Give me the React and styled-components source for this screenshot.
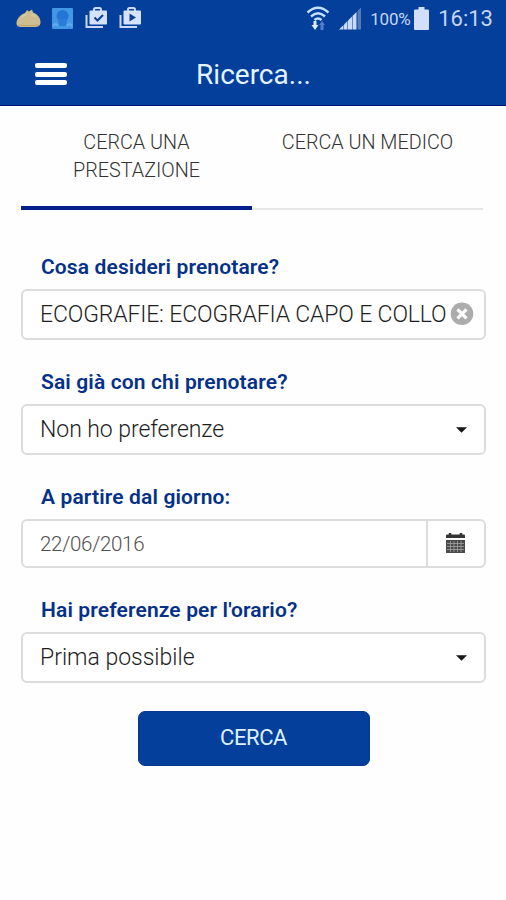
import styled, { createGlobalStyle } from "styled-components";

const GlobalStyle = createGlobalStyle`
  * {
    box-sizing: border-box;
  }

  body {
    margin: 0;
    background-color: #fefefe;
    font-family: Roboto, "Liberation Sans", sans-serif;
  }
`;

const Screen = styled.div`
  width: 506px;
  height: 900px;
  overflow: hidden;
  background-color: #fefefe;
`;

const Header = styled.header`
  height: 106px;
  background-color: #033f9b;
  border-bottom: 1px solid #020f74;
`;

const StatusBar = styled.div`
  display: flex;
  align-items: center;
  justify-content: space-between;
  height: 36px;
  padding: 0 13px 0 16px;
  color: #c5d6f7;
`;

const StatusGroup = styled.div`
  display: flex;
  align-items: center;
`;

const StatusIcon = styled.svg`
  display: block;
  flex: none;
  margin-right: ${({ $gap }) => $gap || 0}px;
`;

const Percent = styled.span`
  width: 40px;
  margin-right: 4px;
  padding-top: 2px;
  font-size: 17px;
  letter-spacing: -0.2px;
  line-height: 36px;
`;

const Clock = styled.span`
  padding-top: 2px;
  font-size: 22px;
  line-height: 36px;
`;

const TitleBar = styled.div`
  display: grid;
  grid-template-columns: 69px 1fr 68px;
  align-items: center;
  height: 69px;
  padding-top: 7px;
`;

const MenuButton = styled.button`
  display: flex;
  flex-direction: column;
  gap: 3.5px;
  width: 32px;
  margin-left: 35px;
  padding: 0;
  border: none;
  background: none;
`;

const MenuLine = styled.span`
  height: 5px;
  border-radius: 2px;
  background-color: #ffffff;
`;

const Title = styled.h1`
  margin: 0;
  padding-top: 2px;
  color: #e2f5ff;
  font-size: 28px;
  font-weight: 400;
  line-height: 34px;
  text-align: center;
`;

const Tabs = styled.nav`
  display: flex;
  align-items: flex-end;
  height: 104px;
  margin: 0 23px 0 21px;
`;

const Tab = styled.button`
  display: flex;
  align-items: flex-start;
  justify-content: center;
  width: 231px;
  height: 104px;
  padding: 23px 30px 0;
  border: none;
  border-bottom: ${({ $active }) =>
    $active ? "4px solid #021f8a" : "2px solid #e6e6e8"};
  background: none;
  color: #333333;
  font-family: inherit;
  font-size: 19.8px;
  font-weight: 300;
  line-height: 28px;
  text-align: center;
  white-space: ${({ $active }) => ($active ? "normal" : "nowrap")};
`;

const Form = styled.form`
  display: flex;
  flex-direction: column;
  padding: 42px 20px 0 21px;
`;

const Field = styled.div`
  margin-bottom: 27px;
`;

const Label = styled.label`
  display: block;
  margin-bottom: 7px;
  padding-left: 20px;
  color: #053189;
  font-size: 21px;
  font-weight: 600;
  letter-spacing: 0.13px;
  line-height: 30px;
`;

const Control = styled.div`
  display: flex;
  align-items: center;
  height: ${({ $height }) => $height || 51}px;
  padding-left: 17px;
  border: 2px solid #dcdcde;
  border-radius: 6px;
  background-color: #ffffff;
`;

const Value = styled.span`
  flex: 1;
  color: ${({ $muted }) => ($muted ? "#505050" : "#1e1e1e")};
  font-size: ${({ $muted }) => ($muted ? 20.5 : 23)}px;
  font-weight: 300;
  letter-spacing: ${({ $spacing }) => $spacing || 0}px;
  line-height: 30px;
  white-space: nowrap;
`;

const ControlIcon = styled.svg`
  display: block;
  flex: none;
  margin-right: ${({ $right }) => $right}px;
`;

const Addon = styled.div`
  display: flex;
  align-items: center;
  height: 100%;
  padding: 0 0 2px 18px;
  border-left: 2px solid #dcdcde;
`;

const SubmitButton = styled.button`
  align-self: center;
  width: 232px;
  height: 55px;
  margin-top: 1px;
  padding: 0 0 2px;
  border: 1px solid #0a3790;
  border-radius: 7px;
  background-color: #033f9b;
  color: #dcf0ff;
  font-family: inherit;
  font-size: 22px;
  font-weight: 400;
  letter-spacing: -0.4px;
`;

const BagIcon = ({ gap, children }) => (
  <StatusIcon $gap={gap} width="23" height="24" viewBox="0 0 23 24">
    <path d="M1.500 9V21H18" fill="none" stroke="#c9daf8" strokeWidth="2" />
    <path
      d="M9 5V3.500Q9 2 10.500 2h4Q16 2 16 3.500V5"
      fill="none"
      stroke="#c9daf8"
      strokeWidth="2"
    />
    <rect x="4.500" y="4.500" width="17.500" height="14" rx="1" fill="#d5e2fb" />
    {children}
  </StatusIcon>
);

const Caret = () => (
  <ControlIcon $right={17} width="11" height="6" viewBox="0 0 11 6">
    <path d="M0 0.300H11L5.500 5.700Z" fill="#161616" />
  </ControlIcon>
);

const ClearIcon = () => (
  <ControlIcon $right={10} width="24" height="26" viewBox="0 0 24 26">
    <circle cx="12" cy="11.800" r="11.300" fill="#acacac" />
    <path d="M7.500 7.300l9 9M16.500 7.300l-9 9" stroke="#ffffff" strokeWidth="3.200" />
  </ControlIcon>
);

const CalendarIcon = () => (
  <ControlIcon $right={19} width="19" height="20" viewBox="0 0 19 20">
    <path d="M0 5V2.500Q0 1.500 1 1.500H18Q19 1.500 19 2.500V5Z" fill="#333333" />
    <path d="M4 0v3M15 0v3" stroke="#333333" strokeWidth="2.500" />
    <rect y="7" width="19" height="13" fill="#4b4b4b" />
    <path
      d="M1 10.500H18M1 13.500H18M1 16.500H18M4.500 8V19M8 8V19M11.500 8V19M15 8V19"
      stroke="#a3a3a3"
      strokeWidth="0.800"
    />
  </ControlIcon>
);

const App = () => {
  return (
    <Screen>
      <GlobalStyle />
      <Header>
        <StatusBar>
          <StatusGroup>
            <StatusIcon $gap={11} width="25" height="20" viewBox="0 0 25 20">
              <path
                d="M0.500 15C1 10.500 4 7 9 5L11 2L13 3.500L16 1.500L17 4.500C22 6 25 11 24.500 15C24 18 22 19 18 19H6C2 19 0.500 18 0.500 15Z"
                fill="#cdbd91"
              />
              <path
                d="M6 9Q8 7 11 6M15 6Q18 7 19.500 9"
                fill="none"
                stroke="#d6ca9f"
                strokeWidth="1.500"
              />
              <path d="M2 17Q12 18.500 23 17" fill="none" stroke="#bda469" />
            </StatusIcon>
            <StatusIcon $gap={12} width="21" height="21" viewBox="0 0 21 21">
              <rect width="21" height="21" rx="1" fill="#4397e4" />
              <circle cx="10.500" cy="8" r="6" fill="#2376d3" />
              <path d="M6 11H15L14 18H7Z" fill="#2a7cd6" />
              <path
                d="M1 18Q4 14 6 18M20 18Q17 14 15 18"
                stroke="#64acec"
                strokeWidth="2"
                fill="none"
              />
            </StatusIcon>
            <BagIcon gap={11}>
              <path
                d="M9.500 11.500l3 3 5.500-5.500"
                fill="none"
                stroke="#0c3f98"
                strokeWidth="2"
              />
            </BagIcon>
            <BagIcon>
              <path d="M10.500 7.500V15.500L17 11.500Z" fill="#0c3f98" />
            </BagIcon>
          </StatusGroup>

          <StatusGroup>
            <StatusIcon $gap={9} width="24" height="26" viewBox="0 0 24 26">
              <path
                d="M1.500 7.500Q12 -2 22.500 7.500M5 11.500Q12 5 19 11.500M8.500 15Q12 11.800 15.500 15"
                fill="none"
                stroke="#c5e2fb"
                strokeWidth="2.400"
              />
              <path d="M7.500 16h3v4h2l-3.500 5-3.500-5h2Z" fill="#d9ecff" />
              <path d="M14.500 25v-5h-1.500l3-4 3 4h-1.500v5Z" fill="#527fc5" />
            </StatusIcon>
            <StatusIcon $gap={9} width="22" height="23" viewBox="0 0 22 23">
              <path d="M0 22.500L4.500 18V22.500Z" fill="#c9dafa" />
              <path d="M5 17.500L8.500 14V22.500H5Z" fill="#c9dafa" />
              <path d="M9 13.500L13 9.500V22.500H9Z" fill="#c9dafa" />
              <path d="M13.500 9L17.500 5V22.500H13.500Z" fill="#c9dafa" />
              <path d="M18.500 4L22 0.500V22.500H18.500Z" fill="#547cb9" />
            </StatusIcon>
            <Percent>100%</Percent>
            <StatusIcon $gap={9} width="15" height="23" viewBox="0 0 15 23">
              <path
                d="M4.500 0H10.500V2.500H14Q15 2.500 15 3.500V22Q15 23 14 23H1Q0 23 0 22V3.500Q0 2.500 1 2.500H4.500Z"
                fill="#d3dffa"
              />
            </StatusIcon>
            <Clock>16:13</Clock>
          </StatusGroup>
        </StatusBar>

        <TitleBar>
          <MenuButton type="button" aria-label="Menu">
            <MenuLine />
            <MenuLine />
            <MenuLine />
          </MenuButton>
          <Title>Ricerca...</Title>
        </TitleBar>
      </Header>

      <Tabs>
        <Tab type="button" $active>
          CERCA UNA PRESTAZIONE
        </Tab>
        <Tab type="button">CERCA UN MEDICO</Tab>
      </Tabs>

      <Form>
        <Field>
          <Label>Cosa desideri prenotare?</Label>
          <Control>
            <Value $spacing={-0.15}>ECOGRAFIE: ECOGRAFIA CAPO E COLLO</Value>
            <ClearIcon />
          </Control>
        </Field>

        <Field>
          <Label>Sai già con chi prenotare?</Label>
          <Control>
            <Value $spacing={-0.05}>Non ho preferenze</Value>
            <Caret />
          </Control>
        </Field>

        <Field>
          <Label>A partire dal giorno:</Label>
          <Control $height={49}>
            <Value $muted $spacing={-0.3}>
              22/06/2016
            </Value>
            <Addon>
              <CalendarIcon />
            </Addon>
          </Control>
        </Field>

        <Field>
          <Label>Hai preferenze per l'orario?</Label>
          <Control>
            <Value>Prima possibile</Value>
            <Caret />
          </Control>
        </Field>

        <SubmitButton type="button">CERCA</SubmitButton>
      </Form>
    </Screen>
  );
};

export default App;
